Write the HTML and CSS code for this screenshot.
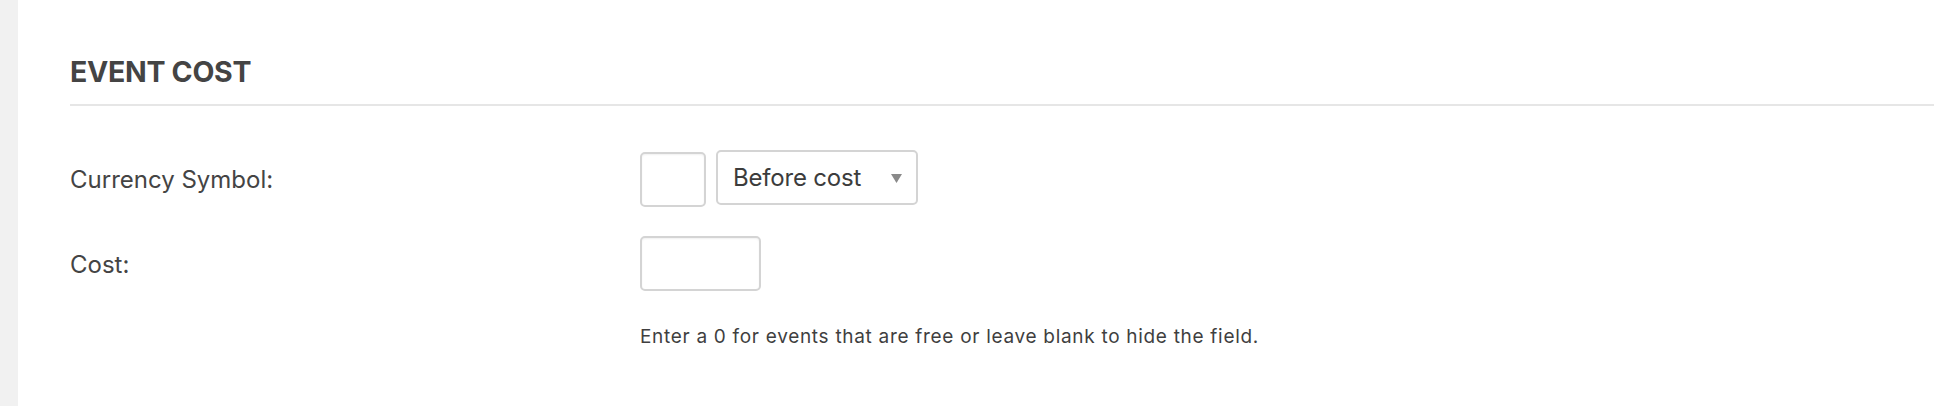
FILE: index.html
```html
<!DOCTYPE html>
<html lang="en">
<head>
<meta charset="utf-8">
<title>Event Cost</title>
<link rel="stylesheet" href="styles.css">
</head>
<body>
  <div class="sidebar-edge"></div>
  <main class="panel">
    <h2 class="section-title">EVENT COST</h2>
    <div class="form">
      <div class="row row-currency">
        <label class="label" for="cur">Currency Symbol:</label>
        <div class="field">
          <input id="cur" class="input input-symbol" type="text">
          <div class="select" role="combobox" aria-expanded="false">
            <span class="select-text">Before cost</span>
            <svg class="select-arrow" width="11" height="9" viewBox="0 0 11 9" aria-hidden="true"><path d="M0 0H11L5.5 9Z" fill="#8a8a8a"/></svg>
          </div>
        </div>
      </div>
      <div class="row row-cost">
        <label class="label" for="cost">Cost:</label>
        <div class="field">
          <input id="cost" class="input input-cost" type="text">
        </div>
      </div>
      <div class="row row-help">
        <div></div>
        <p class="help">Enter a 0 for events that are free or leave blank to hide the field.</p>
      </div>
    </div>
  </main>
</body>
</html>
```
FILE: styles.css
```css
html, body {
  margin: 0;
  padding: 0;
}
body {
  display: flex;
  min-height: 100vh;
  background: #ffffff;
  font-family: Inter, "Liberation Sans", Arial, sans-serif;
  color: #444444;
}
.sidebar-edge {
  width: 18px;
  flex: 0 0 18px;
  background: #f1f1f1;
}
.panel {
  flex: 1 1 auto;
  background: #ffffff;
  padding: 54px 0 0 52px;
}
.section-title {
  margin: 0;
  font-size: 28.5px;
  line-height: 36px;
  font-weight: 700;
  letter-spacing: -0.3px;
  color: #444444;
  padding-bottom: 14px;
  border-bottom: 2px solid #e6e6e6;
}
.form {
  display: flex;
  flex-direction: column;
  padding-top: 44px;
}
.row {
  display: grid;
  grid-template-columns: 570px 1fr;
  align-items: center;
}
.row-cost {
  margin-top: 29px;
}
.row-help {
  margin-top: 33px;
}
.label {
  font-size: 24px;
  line-height: 30px;
  padding-top: 2px;
  color: #444444;
}
.field {
  display: flex;
  align-items: flex-start;
  gap: 10px;
}
.input {
  box-sizing: border-box;
  height: 55px;
  border: 2px solid #d4d4d4;
  border-radius: 5px;
  background: #ffffff;
  box-shadow: inset 0 1px 2px rgba(0, 0, 0, 0.06);
  margin: 0;
  padding: 0 8px;
  font: inherit;
  outline: none;
}
.input-symbol {
  width: 66px;
  margin-top: 2px;
}
.input-cost {
  width: 121px;
}
.select {
  box-sizing: border-box;
  width: 202px;
  height: 55px;
  border: 2px solid #d4d4d4;
  border-radius: 5px;
  background: #ffffff;
  display: flex;
  align-items: center;
  justify-content: space-between;
  padding: 0 14px 0 15px;
}
.select-text {
  font-size: 24px;
  line-height: 30px;
  letter-spacing: -0.2px;
  color: #3c3c3c;
}
.select-arrow {
  display: block;
  margin-top: 1px;
}
.help {
  margin: 0;
  font-size: 19px;
  line-height: 26px;
  letter-spacing: 0.7px;
  color: #3f3f3f;
}
```
